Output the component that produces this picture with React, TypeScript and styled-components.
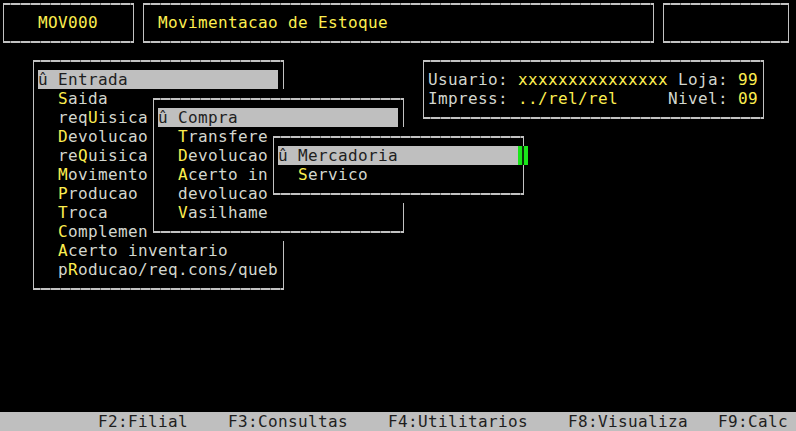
import styled, { createGlobalStyle } from 'styled-components';

// terminal cell size
const CW = 10;
const CH = 19;

const colors = {
  bg: '#000000',
  text: '#d3d7cf',
  yellow: '#fcee4f',
  bar: '#bfbfbf',
  barText: '#1e1e1e',
  line: '#c2c2c2',
  notch: '#6e6e6e',
  cursor: '#1ae61a',
};

type Item = { label: string; hot?: number; selected?: boolean };

const entradaMenu: Item[] = [
  { label: 'Entrada', selected: true },
  { label: 'Saida', hot: 0 },
  { label: 'reqUisica', hot: 3 },
  { label: 'Devolucao', hot: 0 },
  { label: 'reQuisica', hot: 2 },
  { label: 'Movimento', hot: 0 },
  { label: 'Producao', hot: 0 },
  { label: 'Troca', hot: 0 },
  { label: 'Complemen', hot: 0 },
  { label: 'Acerto inventario', hot: 0 },
  { label: 'pRoducao/req.cons/queb', hot: 1 },
];

const compraMenu: Item[] = [
  { label: 'Compra', selected: true },
  { label: 'Transfere', hot: 0 },
  { label: 'Devolucao', hot: 0 },
  { label: 'Acerto in', hot: 0 },
  { label: 'devolucao' },
  { label: 'Vasilhame', hot: 0 },
];

const mercadoriaMenu: Item[] = [
  { label: 'Mercadoria', selected: true },
  { label: 'Servico', hot: 0 },
];

const functionKeys = [
  { label: 'F2:Filial', gap: 10 },
  { label: 'F3:Consultas', gap: 4 },
  { label: 'F4:Utilitarios', gap: 4 },
  { label: 'F8:Visualiza', gap: 4 },
  { label: 'F9:Calc', gap: 3 },
];

const GlobalStyle = createGlobalStyle`
  html, body {
    margin: 0;
    background: ${colors.bg};
    overflow: hidden;
  }
`;

const Screen = styled.div`
  width: 800px;
  height: ${CH * 23}px;
  margin: -6px 0 0 -2px;
  display: flex;
  flex-direction: column;
  background: ${colors.bg};
  color: ${colors.text};
  font-family: 'DejaVu Sans Mono', 'Liberation Mono', monospace;
  font-size: 16px;
  line-height: ${CH}px;
  letter-spacing: 0.367px;
  white-space: pre;
`;

const Frame = styled.div<{ $cols: number; $rows: number }>`
  position: relative;
  flex: none;
  width: ${(p) => p.$cols * CW}px;
  height: ${(p) => p.$rows * CH}px;
  padding: ${CH}px ${CW}px 0;
  box-sizing: border-box;
  background: ${colors.bg};

  &::before {
    content: '';
    position: absolute;
    top: 9px;
    bottom: 8px;
    left: 5px;
    right: 4px;
    border-left: 1px solid ${colors.line};
    border-right: 1px solid ${colors.line};
    background:
      repeating-linear-gradient(90deg, ${colors.line} 0 6px, ${colors.notch} 6px 7px, ${colors.line} 7px 10px) top / 100% 2px no-repeat,
      repeating-linear-gradient(90deg, ${colors.line} 0 6px, ${colors.notch} 6px 7px, ${colors.line} 7px 10px) bottom / 100% 2px no-repeat;
    pointer-events: none;
  }
`;

const Header = styled.div`
  display: flex;
  height: ${CH * 3}px;
`;

const HeaderTitle = styled.div<{ $indent: number }>`
  padding-left: ${(p) => p.$indent * CW}px;
  color: ${colors.yellow};
`;

const Workspace = styled.div`
  position: relative;
  height: ${CH * 19}px;
`;

const InfoPanel = styled(Frame)`
  margin-left: ${CW * 42}px;
`;

const InfoLine = styled.div`
  display: flex;
`;

const Label = styled.span`
  color: ${colors.text};
`;

const Value = styled.span`
  color: ${colors.yellow};
`;

const Popup = styled(Frame)<{ $col: number; $row: number }>`
  position: absolute;
  left: ${(p) => p.$col * CW}px;
  top: ${(p) => (p.$row - 3) * CH}px;
`;

const MenuRow = styled.div<{ $selected?: boolean }>`
  height: ${CH}px;
  background: ${(p) => (p.$selected ? colors.bar : 'transparent')};
  color: ${(p) => (p.$selected ? colors.barText : colors.text)};
`;

const Hot = styled.span`
  color: ${colors.yellow};
`;

const Cursor = styled.div<{ $cols: number }>`
  position: absolute;
  left: ${(p) => (p.$cols - 1) * CW}px;
  top: ${CH}px;
  width: ${CW}px;
  height: ${CH}px;
  background: ${colors.cursor};
  z-index: 1;

  &::after {
    content: '';
    position: absolute;
    left: 4px;
    top: 0;
    bottom: 0;
    width: 2px;
    background: #0a300a;
  }
`;

const StatusBar = styled.div`
  display: flex;
  height: ${CH}px;
  background: ${colors.bar};
  color: ${colors.barText};
`;

const StatusKey = styled.span<{ $gap: number }>`
  margin-left: ${(p) => p.$gap * CW}px;
`;

const MenuEntry = ({ item }: { item: Item }) => {
  if (item.selected) {
    return <MenuRow $selected>{'û ' + item.label}</MenuRow>;
  }
  const { label, hot } = item;
  if (hot === undefined) return <MenuRow>{'  ' + label}</MenuRow>;
  return (
    <MenuRow>
      {'  ' + label.slice(0, hot)}
      <Hot>{label[hot]}</Hot>
      {label.slice(hot + 1)}
    </MenuRow>
  );
};

type MenuProps = { items: Item[]; col: number; row: number; rows: number; cursor?: boolean };

const Menu = ({ items, col, row, rows, cursor }: MenuProps) => (
  <Popup $cols={26} $rows={rows} $col={col} $row={row}>
    {items.map((item) => (
      <MenuEntry key={item.label} item={item} />
    ))}
    {cursor && <Cursor $cols={26} />}
  </Popup>
);

export default function App() {
  return (
    <>
      <GlobalStyle />
      <Screen>
        <Header>
          <Frame $cols={14} $rows={3}>
            <HeaderTitle $indent={3}>MOV000</HeaderTitle>
          </Frame>
          <Frame $cols={52} $rows={3}>
            <HeaderTitle $indent={1}>Movimentacao de Estoque</HeaderTitle>
          </Frame>
          <Frame $cols={13.5} $rows={3} />
        </Header>

        <Workspace>
          <InfoPanel $cols={35} $rows={4}>
            <InfoLine>
              <Label>Usuario: </Label>
              <Value>xxxxxxxxxxxxxxx</Value>
              <Label> Loja: </Label>
              <Value>99</Value>
            </InfoLine>
            <InfoLine>
              <Label>Impress: </Label>
              <Value>../rel/rel</Value>
              <Label>     Nivel: </Label>
              <Value>09</Value>
            </InfoLine>
          </InfoPanel>

          <Menu items={entradaMenu} col={3} row={3} rows={13} />
          <Menu items={compraMenu} col={15} row={5} rows={8} />
          <Menu items={mercadoriaMenu} col={27} row={7} rows={4} cursor />
        </Workspace>

        <StatusBar>
          {functionKeys.map((k) => (
            <StatusKey key={k.label} $gap={k.gap}>
              {k.label}
            </StatusKey>
          ))}
        </StatusBar>
      </Screen>
    </>
  );
}
